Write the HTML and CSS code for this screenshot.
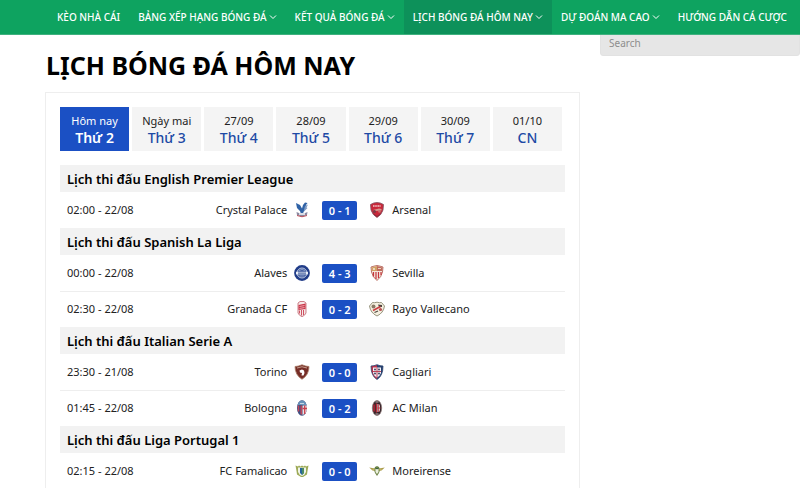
FILE: index.html
```html
<!DOCTYPE html>
<html lang="vi">
<head>
<meta charset="utf-8">
<meta name="viewport" content="width=device-width, initial-scale=1">
<title>Lịch bóng đá hôm nay</title>
<link rel="stylesheet" href="styles.css">
</head>
<body>
<header class="site-header">
  <nav class="nav">
    <a class="nav-link" href="#">KÈO NHÀ CÁI</a>
    <a class="nav-link" href="#">BẢNG XẾP HẠNG BÓNG ĐÁ<svg class="caret" viewBox="0 0 8 6"><path d="M1 1.500 4 4.500 7 1.500"/></svg></a>
    <a class="nav-link" href="#">KẾT QUẢ BÓNG ĐÁ<svg class="caret" viewBox="0 0 8 6"><path d="M1 1.500 4 4.500 7 1.500"/></svg></a>
    <a class="nav-link active" href="#">LỊCH BÓNG ĐÁ HÔM NAY<svg class="caret" viewBox="0 0 8 6"><path d="M1 1.500 4 4.500 7 1.500"/></svg></a>
    <a class="nav-link" href="#">DỰ ĐOÁN MA CAO<svg class="caret" viewBox="0 0 8 6"><path d="M1 1.500 4 4.500 7 1.500"/></svg></a>
    <a class="nav-link" href="#">HƯỚNG DẪN CÁ CƯỢC</a>
  </nav>
</header>
<div class="page">
  <main class="content">
    <h1 class="title">LỊCH BÓNG ĐÁ HÔM NAY</h1>
    <section class="card">
      <div class="days">
        <button class="day selected" type="button"><span class="date">Hôm nay</span><span class="weekday">Thứ 2</span></button>
        <button class="day" type="button"><span class="date">Ngày mai</span><span class="weekday">Thứ 3</span></button>
        <button class="day" type="button"><span class="date">27/09</span><span class="weekday">Thứ 4</span></button>
        <button class="day" type="button"><span class="date">28/09</span><span class="weekday">Thứ 5</span></button>
        <button class="day" type="button"><span class="date">29/09</span><span class="weekday">Thứ 6</span></button>
        <button class="day" type="button"><span class="date">30/09</span><span class="weekday">Thứ 7</span></button>
        <button class="day" type="button"><span class="date">01/10</span><span class="weekday">CN</span></button>
      </div>
      <table class="matches">
        <colgroup><col class="col-time"><col class="col-home"><col class="col-logo"><col class="col-score"><col class="col-logo"><col></colgroup>
        <tbody>
          <tr class="league"><th colspan="6" scope="rowgroup">Lịch thi đấu English Premier League</th></tr>
          <tr class="match">
            <td class="time">02:00 - 22/08</td><td class="home">Crystal Palace</td>
            <td class="logo"><svg class="crest" viewBox="0 0 16 16"><path fill="#2f62a6" d="M2 1 6 3 8 6.500 9 3 11 .5 13.500 1 12 3 11.500 7 9.500 10 9 12H7L6 9 3 6z"/><path fill="#7f9bc4" d="M11 4 14 2.500 12.500 5.500 13.500 6 11.500 8 9.500 10z"/><path fill="#8a88a0" d="M2.500 10 5 11H11L13.500 10 13 13 8 14.500 3 13z"/><path fill="#d8dce6" d="M5 11h6v2H5z"/><path fill="none" stroke="#b84b55" d="M3 13.500Q8 16 13 13.500"/></svg></td>
            <td class="result"><a class="score" href="#">0 - 1</a></td>
            <td class="logo"><svg class="crest" viewBox="0 0 16 16"><path fill="#c9283a" stroke="#7c5060" stroke-width=".8" d="M1.500 2.500Q8-1.500 14.500 2.500L14 8Q12.500 13 8 15.500 3.500 13 2 8z"/><path stroke="#f0c7ca" stroke-width="1.300" stroke-dasharray="1.200 .4" d="M4 4h8"/><path fill="#d79a8f" d="M4 8 10 6.500 12.500 7v1.500L6 9z"/><circle cx="5.500" cy="9.500" r="1.500" fill="#7e3845"/><circle cx="10.500" cy="9.500" r="1.300" fill="#c77470"/><path fill="none" stroke="#8a2637" d="M4.500 12 8 14.500 11.500 12"/></svg></td>
            <td class="away">Arsenal</td>
          </tr>
        </tbody>
        <tbody>
          <tr class="league"><th colspan="6" scope="rowgroup">Lịch thi đấu Spanish La Liga</th></tr>
          <tr class="match">
            <td class="time">00:00 - 22/08</td><td class="home">Alaves</td>
            <td class="logo"><svg class="crest" viewBox="0 0 16 16"><circle cx="8" cy="8" r="7.900" fill="#203c88"/><circle cx="8" cy="8" r="5" fill="#3c589d" stroke="#dbe2f0" stroke-width=".8"/><path fill="#e9eef7" d="M2 6.800h12v2.600H2z"/><path fill="none" stroke="#9fb0d2" stroke-width=".8" d="M5 5.500 8 4.500 11 5.500M5.500 11h5"/><path stroke="#1c3c88" stroke-width=".9" d="M4 8.100h8"/></svg></td>
            <td class="result"><a class="score" href="#">4 - 3</a></td>
            <td class="logo"><svg class="crest" viewBox="0 0 16 16"><path fill="#f4e7df" stroke="#ab5044" stroke-width=".8" d="M2 2Q5 1 8 .5 11 1 14 2L13.500 7Q12.500 12 8 15.500 3.500 12 2.500 7z"/><path fill="#d2a163" d="M2.500 2.500 8 1 8 6H2.800z"/><path fill="#bf6b5e" d="M8 1 13.500 2.500 13 6H8z"/><path fill="#ecd6bd" d="M4 3h2v2H4zm5 0h3v1H9z"/><path stroke="#c5343b" stroke-width="1.200" d="M4.500 7v4.500M7 7v7M9.500 7v6M12 7v3"/></svg></td>
            <td class="away">Sevilla</td>
          </tr>
          <tr class="match">
            <td class="time">02:30 - 22/08</td><td class="home">Granada CF</td>
            <td class="logo"><svg class="crest" viewBox="0 0 16 16"><path fill="#f6e9e9" stroke="#b84b58" stroke-width=".7" d="M4 2 6 .5h4l2 1.500V12Q11 14.500 8 15.700 5 14.500 4 12z"/><path fill="#cb3649" d="M4.500 4 11.500 2.500V8L4.500 9z"/><path stroke="#e8a6ae" d="M5.500 5.500 10.500 4.500M5.500 7.500 10.500 6.500"/><path stroke="#cf5362" d="M5.500 9.500v3M7.500 9v5.500M9.500 9v5"/></svg></td>
            <td class="result"><a class="score" href="#">0 - 2</a></td>
            <td class="logo"><svg class="crest" viewBox="0 0 16 16"><path fill="#f4efdf" stroke="#8b8870" stroke-width=".9" d="M3.500 1.500Q5.500 2 8 1.200 10.500 2 12.500 1.500L15.500 5Q14.500 12 8 15 1.500 12 .5 5z"/><circle cx="4.500" cy="5.500" r="2" fill="#8a7a65"/><path fill="#4b4740" d="M9 3.500 13 4 13 6 10 6z"/><path stroke="#ca3c40" stroke-width="1.500" d="M4 9.500 11.500 5.500"/><circle cx="11.500" cy="8.500" r="1.600" fill="#b75354"/><path stroke="#4f4a43" stroke-width="1.200" d="M5.500 11.500 9 10"/></svg></td>
            <td class="away">Rayo Vallecano</td>
          </tr>
        </tbody>
        <tbody>
          <tr class="league"><th colspan="6" scope="rowgroup">Lịch thi đấu Italian Serie A</th></tr>
          <tr class="match">
            <td class="time">23:30 - 21/08</td><td class="home">Torino</td>
            <td class="logo"><svg class="crest" viewBox="0 0 16 16"><path fill="#762d27" stroke="#a87b66" stroke-width=".8" d="M1 2.500Q4 2.500 8 .8 12 2.500 15 2.500 15 11 8 15.300 1 11 1 2.500z"/><path stroke="#d9b9a6" stroke-width=".8" d="M3 4Q8 1.500 13 4" fill="none"/><path fill="#fff" d="M5.500 6.500 8 5.500 10 6.500 10.500 9 9.500 11.500 7.500 11.500 8 9 6 8.500z"/></svg></td>
            <td class="result"><a class="score" href="#">0 - 0</a></td>
            <td class="logo"><svg class="crest" viewBox="0 0 16 16"><path fill="#bd3149" d="M2 2Q5 2 8 .7V15.500Q2 12 2 2z"/><path fill="#27416f" d="M8 .7Q11 2 14 2 14 12 8 15.500z"/><path fill="none" stroke="#27416f" stroke-width=".8" d="M2 2Q5 2 8 .7 11 2 14 2 14 12 8 15.500 2 12 2 2z"/><path fill="#f3f1f5" d="M4 3.500h8V9Q11 12 8 13.500 5 12 4 9z"/><path stroke="#bd4258" d="M8 3.500v10M4 7.500h8"/><circle cx="6" cy="5.500" r="1" fill="#444561"/><circle cx="10" cy="5.500" r="1" fill="#444561"/><circle cx="6" cy="9.500" r="1" fill="#444561"/><circle cx="10" cy="9.500" r="1" fill="#444561"/></svg></td>
            <td class="away">Cagliari</td>
          </tr>
          <tr class="match">
            <td class="time">01:45 - 22/08</td><td class="home">Bologna</td>
            <td class="logo"><svg class="crest" viewBox="0 0 16 16"><ellipse cx="8" cy="8" rx="5" ry="7.700" fill="#3b4e82"/><path fill="#6793bb" d="M3.500 5Q5 .5 8 .5T12.500 5z"/><path stroke="#c2485a" stroke-width="1.500" d="M4.500 5.500v6M7.200 5.500v9"/><path fill="#f1dfe0" d="M8.500 5.500H12.800V10Q12 14 8.500 15z"/><path stroke="#ca3f4d" stroke-width="1.300" d="M10.700 5.500V14M8.500 8.500H13"/><path stroke="#c6d7e5" d="M6 3.500h4"/></svg></td>
            <td class="result"><a class="score" href="#">0 - 2</a></td>
            <td class="logo"><svg class="crest" viewBox="0 0 16 16"><ellipse cx="8" cy="8" rx="4.700" ry="7.500" fill="#33252a" stroke="#8d7775" stroke-width=".7"/><path stroke="#ba2838" stroke-width="1.500" d="M5 4.500v7M7.500 3.500v9"/><path fill="#efe5e5" d="M8.500 4Q11 4 11 6v4Q11 12 8.500 12z"/><path stroke="#c13443" d="M9.700 4v8M8.500 8H11.500"/><path stroke="#c5b4b3" d="M6.500 2h3M6.500 14h3"/></svg></td>
            <td class="away">AC Milan</td>
          </tr>
        </tbody>
        <tbody>
          <tr class="league"><th colspan="6" scope="rowgroup">Lịch thi đấu Liga Portugal 1</th></tr>
          <tr class="match">
            <td class="time">02:15 - 22/08</td><td class="home">FC Famalicao</td>
            <td class="logo"><svg class="crest" viewBox="0 0 16 16"><path fill="#9eaa57" d="M1.500 2.500 4 3.500 5 2.500 6.500 3.500 8 2.500 9.500 3.500 11 2.500 12 3.500 14.500 2.500 13.500 8 13 11.500 9 14H7L3 11.500 2.500 8z"/><path fill="#eef3e7" d="M4 4.500h8V9Q11 12 8 13 5 12 4 9z"/><path fill="#27659b" d="M6 5h4v5L8 12 6 10z"/><path fill="#498a65" d="M8 5h2v5L8 12z"/></svg></td>
            <td class="result"><a class="score" href="#">0 - 0</a></td>
            <td class="logo"><svg class="crest" viewBox="0 0 16 16"><path fill="#a99a48" d="M.2 4.500 6 5.500 6.500 8 3.500 7.500zM15.800 4.500 10 5.500 9.500 8 12.500 7.500z"/><path fill="#71864a" d="M6 4 8 3 10 4 11 7 10 10 8 13 6 10 5 7z"/><path fill="#edf1df" d="M6.500 6h3v3L8 11 6.500 9z"/><path stroke="#315f42" d="M6.500 5 8 6 9.500 5" fill="none"/><path stroke="#c8bd6e" stroke-width=".7" d="M3 6 6 7M13 6 10 7"/></svg></td>
            <td class="away">Moreirense</td>
          </tr>
        </tbody>
      </table>
    </section>
  </main>
  <aside class="sidebar">
    <input class="search" type="search" placeholder="Search" aria-label="Search">
  </aside>
</div>
</body>
</html>
```
FILE: styles.css
```css
* {
  box-sizing: border-box;
}

body {
  margin: 0;
  background: #fff;
  color: #222;
  font-family: "Noto Sans", "Open Sans", sans-serif;
  font-size: 11px;
  line-height: 16px;
  overflow-x: hidden;
}

.site-header {
  position: sticky;
  top: 0;
  z-index: 2;
  background: #0ea360;
  border-bottom: 1px solid #3fb17f;
}

.nav {
  display: flex;
  padding-left: 48px;
}

.nav-link {
  display: flex;
  align-items: center;
  gap: 2px;
  padding: 9px;
  color: #fff;
  font-size: 10px;
  font-weight: 500;
  text-decoration: none;
  white-space: nowrap;
}

.nav-link.active {
  background: #0d915a;
}

.caret {
  width: 8px;
  height: 6px;
  fill: none;
  stroke: #fff;
}

.page {
  display: grid;
  grid-template-columns: minmax(0, 535fr) minmax(0, 200fr);
  gap: 20px;
  padding-left: 45px;
}

.title {
  margin: 14px 0 11px;
  padding-left: 1px;
  color: #000;
  font-size: 25px;
  font-weight: 700;
  line-height: 32px;
}

.card {
  padding: 14px 14px 20px;
  border: 1px solid #eee;
}

.days {
  display: grid;
  grid-template-columns: repeat(7, 1fr);
  gap: 3px;
  padding-right: 3px;
  margin-bottom: 14px;
}

.day {
  display: flex;
  flex-direction: column;
  align-items: center;
  padding: 5px 0;
  border: 0;
  background: #f4f4f4;
  color: #222;
  font-family: inherit;
  font-size: 11px;
  line-height: 17px;
}

.weekday {
  color: #1d4aa5;
  font-size: 14px;
  font-weight: 500;
}

.day.selected,
.day.selected .weekday {
  background: #1b50c4;
  color: #fff;
}

.day.selected .weekday {
  font-weight: 600;
}

.matches {
  width: 100%;
  border-collapse: collapse;
  table-layout: fixed;
}

.col-time {
  width: 20%;
}

.col-home {
  width: 25%;
}

.col-logo {
  width: 30px;
}

.col-score {
  width: 45px;
}

.league th {
  height: 27px;
  padding: 0 7px;
  background: #f2f2f2;
  color: #000;
  font-size: 13px;
  font-weight: 600;
  text-align: left;
}

.match td {
  height: 36px;
  padding: 0;
  white-space: nowrap;
}

.match + .match td {
  box-shadow: inset 0 1px #eee;
}

.match .time {
  padding-left: 7px;
}

.match .home {
  text-align: right;
}

.match .logo,
.match .result {
  text-align: center;
}

.crest {
  display: block;
  width: 16px;
  height: 16px;
  margin: 0 auto;
}

.score {
  display: block;
  width: 35px;
  margin: 0 auto;
  border-radius: 2px;
  background: #1b50c4;
  color: #fff;
  font-size: 11px;
  font-weight: 600;
  line-height: 19px;
  text-decoration: none;
}

.search {
  display: block;
  width: 100%;
  height: 26px;
  margin-top: -5px;
  padding: 0 8px;
  border: 1px solid #e2e2e2;
  border-radius: 3px;
  background: #e6e6e6;
  font-family: inherit;
  font-size: 10px;
}

.search::placeholder {
  color: #8d8d8d;
  opacity: 1;
}
```
